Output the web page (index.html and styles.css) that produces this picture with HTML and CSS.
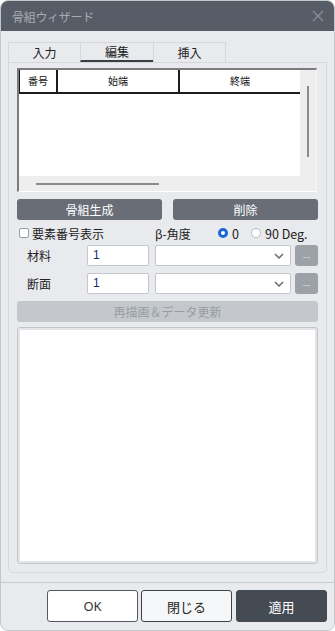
FILE: index.html
```html
<!DOCTYPE html>
<html lang="ja">
<head>
<meta charset="utf-8">
<link rel="stylesheet" href="styles.css">
</head>
<body>
<div class="window">
  <div class="titlebar">
    <span class="title">骨組ウィザード</span>
    <svg class="close" width="12" height="12" viewBox="0 0 12 12"><path d="M1 1L11 11M11 1L1 11" stroke="#8b9097" stroke-width="1.2" fill="none"/></svg>
  </div>
  <div class="content">
    <div class="tabs">
      <div class="tab">入力</div>
      <div class="tab active">編集</div>
      <div class="tab">挿入</div>
    </div>
    <div class="panel">
      <div class="grid">
        <div class="grid-main">
          <div class="grid-body">
            <div class="grid-head">
              <div class="hcell c1">番号</div>
              <div class="hcell c2">始端</div>
              <div class="hcell c3">終端</div>
            </div>
          </div>
          <div class="vscroll"><div class="vthumb"></div></div>
        </div>
        <div class="hscroll"><div class="hthumb"></div></div>
      </div>
      <div class="btnrow">
        <button class="btn dark">骨組生成</button>
        <button class="btn dark">削除</button>
      </div>
      <div class="optrow">
        <label class="chk"><span class="box"></span>要素番号表示</label>
        <span class="beta">β-角度</span>
        <span class="radio on"></span><span class="rlabel">0</span>
        <span class="radio"></span><span class="rlabel">90 Deg.</span>
      </div>
      <div class="fieldrow">
        <span class="flabel">材料</span>
        <div class="input">1</div>
        <div class="select"><svg width="10" height="6" viewBox="0 0 10 6"><path d="M1 1L5 5L9 1" stroke="#6f7378" stroke-width="1.6" fill="none"/></svg></div>
        <button class="dots">...</button>
      </div>
      <div class="fieldrow">
        <span class="flabel">断面</span>
        <div class="input">1</div>
        <div class="select"><svg width="10" height="6" viewBox="0 0 10 6"><path d="M1 1L5 5L9 1" stroke="#6f7378" stroke-width="1.6" fill="none"/></svg></div>
        <button class="dots">...</button>
      </div>
      <button class="btn refresh">再描画＆データ更新</button>
      <div class="view"></div>
    </div>
  </div>
  <div class="footer">
    <button class="fbtn ok">OK</button>
    <button class="fbtn close-btn">閉じる</button>
    <button class="fbtn apply">適用</button>
  </div>
</div>
</body>
</html>
```

FILE: styles.css
```css
* { box-sizing: border-box; }
html, body { margin: 0; padding: 0; background: #ffffff; }
body {
  font-family: "Noto Sans CJK JP", "Noto Sans", sans-serif;
  color: #222;
}
.window {
  width: 335px;
  height: 631px;
  background: #e9eaed;
  border: 1px solid #c3c6ca;
  border-radius: 8px;
  overflow: hidden;
  display: flex;
  flex-direction: column;
}
.titlebar {
  height: 30px;
  background: #575d66;
  display: flex;
  align-items: center;
  justify-content: space-between;
  padding: 0 10px 0 11px;
  flex-shrink: 0;
}
.title { color: #a8acb2; font-size: 12px; letter-spacing: -0.3px; }
.close { display: block; }
.content { padding: 11px 7px 0 7px; }
.tabs { display: flex; height: 20px; }
.tab {
  width: 73px;
  border: 1px solid #d5d7db;
  border-bottom: none;
  border-right: none;
  font-size: 12px;
  line-height: 19px;
  text-align: center;
  color: #222;
}
.tab:first-child { width: 72px; }
.tab:last-child { border-right: 1px solid #d5d7db; }
.tab.active { border-bottom: 2px solid #3b3f45; line-height: 17px; }
.panel {
  border: 1px solid #d5d7db;
  border-radius: 0 0 5px 5px;
  padding: 5px 8px 8px 8px;
  height: 511px;
  display: flex;
  flex-direction: column;
}
.grid {
  height: 124px;
  width: 300px;
  border-style: solid;
  border-width: 2px 1px 1px 2px;
  border-color: #7c7c7c #f4f4f4 #ffffff #7c7c7c;
  background: #eeeeee;
  display: flex;
  flex-direction: column;
}
.grid-main { display: flex; height: 106px; }
.grid-body { width: 281px; background: #fff; }
.grid-head { display: flex; height: 24px; border-bottom: 2px solid #1c1c1c; }
.hcell {
  border-left: 1px solid #1c1c1c;
  font-size: 10px;
  line-height: 22px;
  text-align: center;
  color: #111;
}
.c1 { width: 37px; }
.c2 { width: 122px; border-left-width: 2px; }
.c3 { width: 122px; border-left-width: 2px; }
.vscroll { flex: 1; padding: 16px 0 0 7px; }
.vthumb { width: 2px; height: 71px; background: #8b8b8b; }
.hscroll { flex: 1; padding: 7px 0 0 17px; }
.hthumb { width: 123px; height: 2px; background: #8b8b8b; }
.btnrow { display: flex; gap: 11px; margin-top: 7px; }
.btn {
  border: none;
  border-radius: 3px;
  font-family: inherit;
  font-size: 12px;
  height: 21px;
  padding: 0;
}
.btn.dark { flex: 1; background: #696e76; color: #fff; }
.optrow {
  display: flex;
  align-items: center;
  height: 14px;
  margin-top: 6px;
  font-size: 12px;
  margin-left: 2px;
}
.chk { display: flex; align-items: center; width: 136px; }
.box {
  width: 10px; height: 10px;
  border: 1px solid #9b9ea3;
  border-radius: 2px;
  background: #fff;
  margin-right: 3px;
}
.beta { width: 63px; }
.radio {
  width: 10px; height: 10px;
  border-radius: 50%;
  border: 1px solid #b5b8bc;
  background: #fff;
  margin-right: 4px;
}
.radio.on { border: 3px solid #1668d6; }
.rlabel { margin-right: 12px; font-size: 12.5px; }
.rlabel:last-child { margin-right: 0; }
.fieldrow {
  display: flex;
  align-items: center;
  height: 21px;
  margin-top: 7px;
}
.optrow + .fieldrow { margin-top: 5px; }
.flabel { width: 70px; padding-left: 10px; font-size: 12px; }
.input {
  width: 62px; height: 21px;
  background: #fff;
  border: 1px solid #c4c7cb;
  border-radius: 2px;
  font-size: 12px;
  line-height: 19px;
  padding-left: 5px;
  color: #1a2d63;
  font-family: "Liberation Sans", sans-serif;
}
.select {
  width: 136px; height: 21px;
  margin-left: 6px;
  background: #fff;
  border: 1px solid #c4c7cb;
  border-radius: 2px;
  display: flex;
  align-items: center;
  justify-content: flex-end;
  padding-right: 6px;
}
.select svg { display: block; }
.dots {
  width: 23px; height: 21px;
  margin-left: 4px;
  border: none;
  border-radius: 3px;
  background: #9da1a8;
  color: #fff;
  font-size: 9px;
  padding: 0 0 2px 0;
  font-family: "Liberation Sans", sans-serif;
}
.btn.refresh {
  margin-top: 7px;
  width: 301px;
  background: #c4c8cd;
  color: #979ca3;
}
.view {
  margin-top: 5px;
  width: 301px;
  height: 237px;
  background: #fff;
  border: 1px solid #c3c5c9;
  border-radius: 3px;
  box-shadow: inset 0 0 0 2px #e4e5e8;
}
.footer {
  margin-top: 9px;
  border-top: 1px solid #c9cbcf;
  display: flex;
  justify-content: flex-end;
  gap: 3px;
  padding: 7px 7px 0 0;
}
.fbtn {
  width: 91px;
  height: 32px;
  border-radius: 3px;
  font-family: inherit;
  font-size: 13px;
  padding: 0;
}
.fbtn.ok { background: #fff; border: 1px solid #55595f; color: #333; font-family: "Noto Sans", sans-serif; }
.fbtn.close-btn { background: #f6f7f9; border: 1px solid #3f4348; color: #222; }
.fbtn.apply { background: #454b53; border: 1px solid #454b53; color: #fff; margin-left: 1px; }
```
